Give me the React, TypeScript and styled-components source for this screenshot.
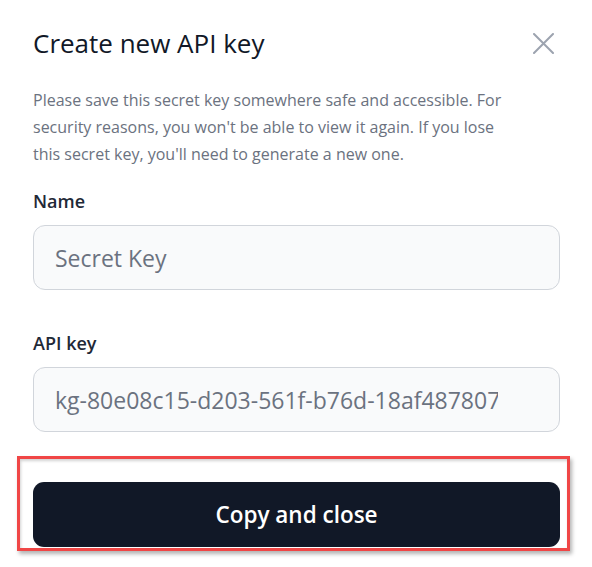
import React from "react";
import styled, { createGlobalStyle } from "styled-components";

const Global = createGlobalStyle`
  html, body { margin: 0; padding: 0; background: #ffffff; }
  body { font-family: "Open Sans", "Noto Sans", Arial, sans-serif; -webkit-font-smoothing: antialiased; }
  * { box-sizing: border-box; }
`;

const Dialog = styled.div`
  width: 592px;
  height: 567px;
  padding: 27px 32px 0 33px;
  display: flex;
  flex-direction: column;
  background: #ffffff;
`;

const Header = styled.div`
  display: flex;
  align-items: center;
  justify-content: space-between;
  height: 32px;
`;

const Title = styled.h2`
  margin: 0;
  font-size: 26px;
  line-height: 32px;
  font-weight: 500;
  color: #111827;
`;

const CloseButton = styled.button`
  border: 0;
  background: transparent;
  padding: 0;
  width: 22px;
  height: 22px;
  margin-right: 6px;
  display: flex;
  align-items: center;
  justify-content: center;
  color: #9ca3af;
  cursor: pointer;
`;

const Description = styled.p`
  margin: 28px 0 0;
  max-width: 472px;
  font-size: 16px;
  line-height: 27px;
  color: #6b7280;
`;

const Field = styled.div<{ $gap: number }>`
  display: flex;
  flex-direction: column;
  gap: 12px;
  margin-top: ${(p) => p.$gap}px;
`;

const Label = styled.label`
  font-size: 18px;
  line-height: 24px;
  font-weight: 600;
  color: #1f2937;
`;

const TextInput = styled.input<{ $padRight: number }>`
  width: 100%;
  height: 65px;
  border: 1px solid #d1d5db;
  border-radius: 12px;
  background: #f9fafb;
  padding: 0 ${(p) => p.$padRight}px 0 21px;
  font-family: inherit;
  font-size: 23px;
  color: #6b7280;
  outline: none;
  &::placeholder { color: #6b7280; opacity: 1; }
`;

const ButtonArea = styled.div`
  position: relative;
  margin-top: 50px;
`;

const PrimaryButton = styled.button`
  width: 100%;
  height: 65px;
  border: 0;
  border-radius: 11px;
  background: #111827;
  color: #ffffff;
  font-family: inherit;
  font-size: 22.5px;
  font-weight: 600;
  cursor: pointer;
`;

const Highlight = styled.div`
  position: absolute;
  top: -26px;
  left: -16px;
  right: -10px;
  bottom: -4px;
  border: 3px solid #f04646;
  box-shadow: 2px 3px 4px rgba(0, 0, 0, 0.3), inset 1px 2px 3px rgba(0, 0, 0, 0.18);
  pointer-events: none;
`;

export default function App() {
  return (
    <>
      <Global />
      <Dialog>
        <Header>
          <Title>Create new API key</Title>
          <CloseButton aria-label="Close">
            <svg width="21" height="21" viewBox="0 0 21 21" fill="none">
              <path d="M1 1L20 20M20 1L1 20" stroke="currentColor" strokeWidth="2" strokeLinecap="round" />
            </svg>
          </CloseButton>
        </Header>
        <Description>
          Please save this secret key somewhere safe and accessible. For security reasons, you won't be able to view it again. If you lose this secret key, you'll need to generate a new one.
        </Description>
        <Field $gap={21}>
          <Label>Name</Label>
          <TextInput $padRight={21} placeholder="Secret Key" />
        </Field>
        <Field $gap={41}>
          <Label>API key</Label>
          <TextInput $padRight={61} readOnly value="kg-80e08c15-d203-561f-b76d-18af48780793" />
        </Field>
        <ButtonArea>
          <PrimaryButton>Copy and close</PrimaryButton>
          <Highlight />
        </ButtonArea>
      </Dialog>
    </>
  );
}
